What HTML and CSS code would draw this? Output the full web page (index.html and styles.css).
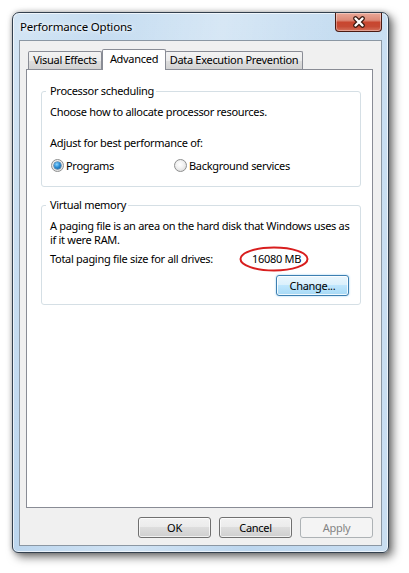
FILE: index.html
```html
<!DOCTYPE html>
<html lang="en">
<head>
<meta charset="utf-8">
<title>Performance Options</title>
<link rel="stylesheet" href="styles.css">
</head>
<body>
<div class="window">
  <div class="titlebar">
    <span class="title">Performance Options</span>
    <button class="close" aria-label="Close">
      <svg width="14" height="12" viewBox="0 0 14 12">
        <path d="M3.5 2.5 L10.5 9.5 M10.5 2.5 L3.5 9.5" stroke="#3a1a12" stroke-width="4.6" stroke-linecap="round" fill="none"/>
        <path d="M3.5 2.5 L10.5 9.5 M10.5 2.5 L3.5 9.5" stroke="#ffffff" stroke-width="2.4" stroke-linecap="round" fill="none"/>
      </svg>
    </button>
  </div>
  <div class="client">
    <div class="tabs">
      <div class="tab tab-ve">Visual Effects</div>
      <div class="tab tab-adv active">Advanced</div>
      <div class="tab tab-dep">Data Execution Prevention</div>
    </div>
    <div class="panel">
      <fieldset class="group group-proc">
        <legend>Processor scheduling</legend>
        <p class="line first">Choose how to allocate processor resources.</p>
        <p class="line adjust">Adjust for best performance of:</p>
        <div class="radios">
          <label class="radio-item"><span class="radio checked"></span>Programs</label>
          <label class="radio-item"><span class="radio"></span>Background services</label>
        </div>
      </fieldset>
      <fieldset class="group group-vm">
        <legend>Virtual memory</legend>
        <p class="line first para">A paging file is an area on the hard disk that Windows uses as<br>if it were RAM.</p>
        <div class="total">
          <span class="total-label">Total paging file size for all drives:</span>
          <span class="value">16080 MB<svg class="circle" width="70" height="26" viewBox="0 0 70 26"><ellipse cx="35" cy="13" rx="33.5" ry="11.5" fill="none" stroke="#d81e1e" stroke-width="2"/></svg></span>
        </div>
        <div class="change-row"><button class="btn btn-default">Change...</button></div>
      </fieldset>
    </div>
    <div class="buttons">
      <button class="btn">OK</button>
      <button class="btn">Cancel</button>
      <button class="btn" disabled>Apply</button>
    </div>
  </div>
</div>
</body>
</html>
```
FILE: styles.css
```css
html, body {
  margin: 0;
  padding: 0;
  background: #ffffff;
}
body {
  width: 409px;
  height: 573px;
  overflow: hidden;
  padding: 12px 0 0 12px;
  box-sizing: border-box;
  font-family: "Noto Sans", "Open Sans", sans-serif;
  font-size: 11px;
  letter-spacing: -0.3px;
  color: #000;
}
.window {
  width: 377px;
  height: 541px;
  box-sizing: border-box;
  border: 1px solid #33404e;
  border-radius: 7px 7px 6px 6px;
  padding: 0 6px 6px 6px;
  display: flex;
  flex-direction: column;
  background:
    linear-gradient(100deg, rgba(255,255,255,0.25) 0%, rgba(255,255,255,0) 20%, rgba(255,255,255,0.3) 45%, rgba(255,255,255,0) 70%, rgba(255,255,255,0.2) 100%),
    linear-gradient(to bottom, #c6ddf1 0%, #bcd6ee 100%);
  box-shadow: inset 0 0 0 1px rgba(255,255,255,0.65), 4px 4px 10px rgba(0,0,0,0.55), 0 0 5px rgba(0,0,0,0.25);
}
.titlebar {
  height: 27px;
  display: flex;
  align-items: flex-start;
  flex: none;
}
.title {
  padding: 7px 0 0 1px;
  line-height: 14px;
  font-size: 11.5px;
  letter-spacing: -0.2px;
  text-shadow: 0 0 6px rgba(255,255,255,0.9), 0 0 3px rgba(255,255,255,0.9);
}
.close {
  margin-left: auto;
  width: 47px;
  height: 19px;
  padding: 0;
  border: 1px solid #4a1a12;
  border-top: none;
  border-radius: 0 0 4px 4px;
  background: linear-gradient(to bottom, #e9a898 0%, #dc8a78 40%, #c8462f 52%, #c64a34 75%, #d5725c 100%);
  box-shadow: inset 0 0 0 1px rgba(255,255,255,0.35);
  display: flex;
  align-items: center;
  justify-content: center;
}
.close svg {
  display: block;
}
.client {
  flex: 1;
  border: 1px solid #8b97a3;
  background: #f0f0f0;
  padding: 8px 8px 0 6px;
  display: flex;
  flex-direction: column;
}
.tabs {
  height: 20px;
  display: flex;
  align-items: flex-end;
  padding-left: 2px;
  position: relative;
  z-index: 1;
}
.tab {
  box-sizing: border-box;
  height: 18px;
  border: 1px solid #898c95;
  border-bottom: none;
  border-radius: 2px 2px 0 0;
  background: linear-gradient(to bottom, #f3f3f3 0%, #ebebeb 50%, #dedede 50%, #d2d2d2 100%);
  text-align: center;
  line-height: 16px;
  white-space: nowrap;
}
.tab-ve { width: 74px; }
.tab-adv { width: 64px; }
.tab-dep { width: 138px; margin-left: -1px; }
.tab.active {
  height: 21px;
  margin-bottom: -1px;
  background: #ffffff;
  line-height: 14px;
  padding-top: 2px;
  position: relative;
  z-index: 2;
}
.panel {
  height: 439px;
  box-sizing: border-box;
  border: 1px solid #898c95;
  background: #ffffff;
  display: flex;
  flex-direction: column;
}
.group {
  margin: 14px 11px 0 14px;
  border: 1px solid #d5dfe5;
  border-radius: 3px;
  padding: 0 8px;
  min-width: 0;
}
.group legend {
  line-height: 14px;
  padding: 0 2px 0 4px;
  margin-left: -4px;
}
.group-proc { padding-bottom: 13px; }
.group-vm { margin-top: 11px; padding-bottom: 8px; }
.line {
  margin: 0;
  line-height: 13px;
  white-space: nowrap;
}
.line.first { margin-top: 7px; }
.line.para {
  margin-top: 7px;
  line-height: 14px;
}
.line.adjust { margin-top: 18px; }
.radios {
  margin-top: 9px;
  display: flex;
  height: 15px;
  align-items: center;
}
.radio-item {
  width: 123px;
  display: flex;
  align-items: center;
  line-height: 15px;
  white-space: nowrap;
}
.radio {
  width: 13px;
  height: 13px;
  box-sizing: border-box;
  border-radius: 50%;
  border: 1px solid #8e8f8f;
  margin: 0 2px 0 1px;
  background: radial-gradient(circle at 45% 40%, #ffffff 0%, #f2f2f2 40%, #d4d4d4 100%);
  display: flex;
  align-items: center;
  justify-content: center;
  flex: none;
}
.radio.checked::after {
  content: "";
  width: 7px;
  height: 7px;
  border-radius: 50%;
  background: radial-gradient(circle at 40% 35%, #8fd6ff 0%, #2c8fd6 45%, #0c4e8c 100%);
  box-shadow: 0 0 0 0.5px #174f7e;
}
.total {
  margin-top: 5px;
  display: grid;
  grid-template-columns: 202px auto;
  line-height: 13px;
  white-space: nowrap;
}
.value {
  position: relative;
  justify-self: start;
}
.circle {
  position: absolute;
  left: -13px;
  top: -6px;
  pointer-events: none;
}
.change-row {
  margin-top: 10px;
  display: flex;
  justify-content: flex-end;
}
.btn {
  width: 73px;
  height: 21px;
  box-sizing: border-box;
  padding: 0;
  font-family: inherit;
  font-size: 11px;
  letter-spacing: -0.3px;
  color: #000;
  border: 1px solid #707070;
  border-radius: 3px;
  background: linear-gradient(to bottom, #f2f2f2 0%, #ebebeb 50%, #dddddd 50%, #cfcfcf 100%);
  box-shadow: inset 0 0 0 1px rgba(255,255,255,0.7);
}
.btn-default {
  margin-right: 3px;
  border-color: #3c7fb1;
  background: linear-gradient(to bottom, #eaf6fd 0%, #d9f0fc 50%, #bee6fd 50%, #a7d9f5 100%);
  box-shadow: inset 0 0 0 1px rgba(255,255,255,0.8), 0 0 2px rgba(60,160,230,0.6);
}
.btn:disabled {
  border-color: #adb2b5;
  background: #f4f4f4;
  color: #838383;
  box-shadow: none;
}
.buttons {
  margin-top: 9px;
  display: flex;
  justify-content: flex-end;
  gap: 8px;
}
```
